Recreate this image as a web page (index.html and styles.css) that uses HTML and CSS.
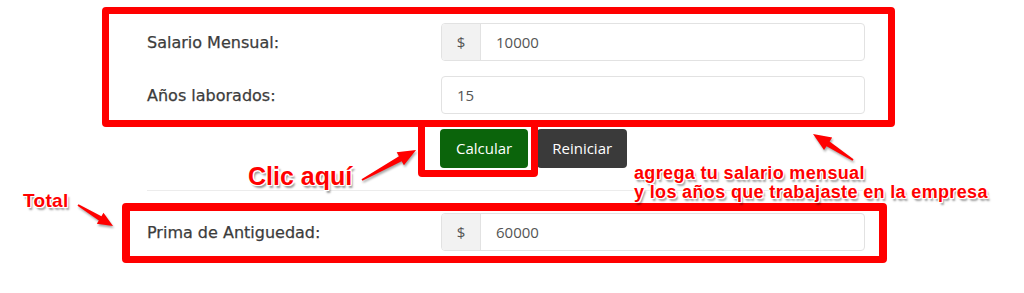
FILE: index.html
```html
<!DOCTYPE html>
<html lang="es">
<head>
<meta charset="utf-8">
<title>Prima de Antigüedad</title>
<link rel="stylesheet" href="styles.css">
</head>
<body>
<div class="page">
  <form class="calc">
    <div class="row">
      <div class="label">Salario Mensual:</div>
      <div class="group"><span class="addon">$</span><span class="field">10000</span></div>
    </div>
    <div class="row">
      <div class="label">Años laborados:</div>
      <div class="group"><span class="field">15</span></div>
    </div>
    <div class="actions">
      <button type="button" class="btn btn-green">Calcular</button>
      <button type="button" class="btn btn-dark">Reiniciar</button>
    </div>
    <hr class="sep">
    <div class="row row-last">
      <div class="label">Prima de Antiguedad:</div>
      <div class="group"><span class="addon">$</span><span class="field">60000</span></div>
    </div>
  </form>

  <div class="mark mark-inputs"></div>
  <div class="mark mark-button"></div>
  <div class="mark mark-total"></div>

  <svg class="arrows" width="1024" height="293" viewBox="0 0 1024 293">
    <polygon fill="#ff0000" transform="translate(362 180) rotate(-29.05)" points="0,-1 43.8,-2.8 43.8,-7.5 61.8,0 43.8,7.5 43.8,2.8 0,1"/>
    <polygon fill="#ff0000" transform="translate(853 160) rotate(-146.98)" points="0,-1 29.7,-2.8 29.7,-7.5 47.7,0 29.7,7.5 29.7,2.8 0,1"/>
    <polygon fill="#ff0000" transform="translate(78 205) rotate(30.96)" points="0,-1 25.8,-2.5 25.8,-6.5 40.8,0 25.8,6.5 25.8,2.5 0,1"/>
  </svg>

  <p class="note note-clic">Clic aquí</p>
  <p class="note note-total">Total</p>
  <p class="note note-help">agrega tu salario mensual<br>y los años que trabajaste en la empresa</p>
</div>
</body>
</html>
```

FILE: styles.css
```css
html, body {
  margin: 0;
  padding: 0;
  background: #ffffff;
}

.page {
  position: relative;
  width: 1024px;
  height: 293px;
  overflow: hidden;
}

.calc {
  width: 718px;
  margin: 0 0 0 147px;
  padding-top: 23px;
  font-family: "Open Sans", "DejaVu Sans", sans-serif;
}

.row {
  display: grid;
  grid-template-columns: 294px 424px;
  align-items: center;
  margin-bottom: 15px;
}

.row-last {
  margin-bottom: 0;
}

.label {
  font-family: "DejaVu Sans", sans-serif;
  font-weight: normal;
  font-size: 16px;
  color: #3c3c3c;
  -webkit-text-stroke: 0.25px #3c3c3c;
}

.group {
  display: flex;
  height: 38px;
  box-sizing: border-box;
  border: 1px solid #e2e2e2;
  border-radius: 4px;
  overflow: hidden;
}

.addon {
  width: 38px;
  flex: none;
  display: flex;
  align-items: center;
  justify-content: center;
  background: #f2f2f2;
  border-right: 1px solid #e2e2e2;
  color: #555555;
  font-size: 15px;
}

.field {
  flex: 1;
  display: flex;
  align-items: center;
  padding-left: 15px;
  color: #555555;
  font-size: 15px;
}

.actions {
  display: flex;
  gap: 9px;
  margin-left: 293px;
}

.btn {
  height: 39px;
  border: 0;
  border-radius: 4px;
  color: #ffffff;
  font-family: "Open Sans", sans-serif;
  font-size: 15px;
  line-height: 39px;
  padding: 0 16px;
  margin: 0;
}

.btn-green {
  background: #0b640b;
}

.btn-dark {
  background: #3a3a3a;
  padding: 0 15px;
}

.sep {
  margin: 22px 0 22px;
  height: 0;
  border: 0;
  border-top: 1px solid #ececec;
}

/* annotation overlays */
.mark {
  position: absolute;
  box-sizing: border-box;
  border: 7px solid #ff0000;
  border-radius: 4px;
}

.mark-inputs {
  left: 102px;
  top: 7px;
  width: 793px;
  height: 120px;
}

.mark-button {
  left: 418px;
  top: 120px;
  width: 120px;
  height: 57px;
}

.mark-total {
  left: 122px;
  top: 203px;
  width: 765px;
  height: 60px;
  border-width: 8px;
  border-bottom-width: 7px;
}

.arrows {
  position: absolute;
  left: 0;
  top: 0;
  filter: drop-shadow(1px 2px 1px rgba(0, 0, 0, 0.35));
}

.note {
  position: absolute;
  margin: 0;
  font-family: "Liberation Sans", Arial, sans-serif;
  font-weight: bold;
  color: #ff0000;
  white-space: nowrap;
  text-shadow:
    1px 0 0 #fff, -1px 0 0 #fff, 0 1px 0 #fff, 0 -1px 0 #fff,
    1px 1px 0 #fff, -1px -1px 0 #fff, 1px -1px 0 #fff, -1px 1px 0 #fff,
    2px 3px 2px rgba(0, 0, 0, 0.4);
}

.note-clic {
  left: 248px;
  top: 163px;
  font-size: 25px;
  line-height: 26px;
}

.note-total {
  left: 23px;
  top: 191px;
  font-size: 19px;
  line-height: 20px;
  letter-spacing: 0.3px;
}

.note-help {
  left: 634px;
  top: 164px;
  font-size: 18px;
  line-height: 19px;
  letter-spacing: 0.35px;
}
```
